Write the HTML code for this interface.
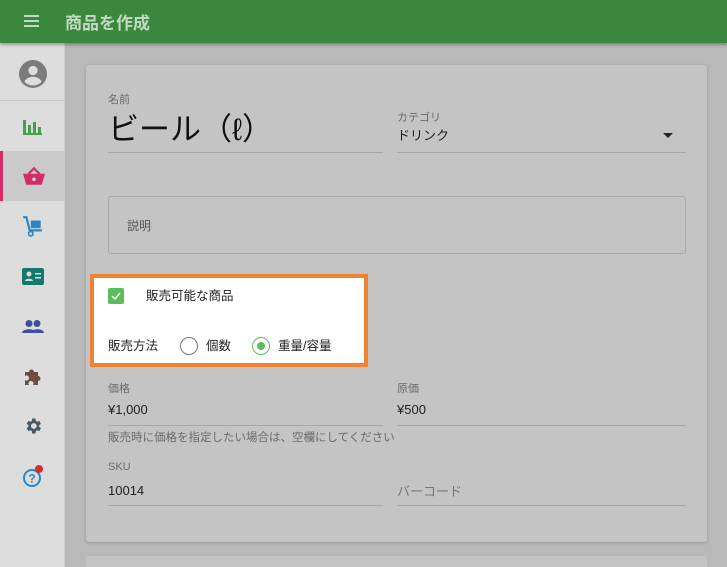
<!DOCTYPE html>
<html><head><meta charset="utf-8"><style>
*{margin:0;padding:0;box-sizing:border-box}
html,body{width:727px;height:567px;overflow:hidden}
body{background:#b9b9b9;font-family:"Liberation Sans","Noto Sans CJK JP",sans-serif;position:relative;color:#222}
.hdr{position:absolute;left:0;top:0;width:727px;height:43px;background:#3a883d;box-shadow:0 2px 3px rgba(0,0,0,.3);z-index:2}
.hdr .t{position:absolute;left:65px;top:9px;font-size:17px;color:#c3d8c3;font-weight:bold}
.ham{position:absolute;left:24px;top:15px;width:15px}
.ham i{display:block;height:2px;background:#c5d8c5;margin-bottom:3px}
.side{position:absolute;left:0;top:43px;width:65px;height:524px;background:#dddddd;border-right:1px solid #cfcfcf}
.it{position:absolute;left:0;width:65px;height:50px;display:flex;align-items:center;justify-content:center}
.card{position:absolute;left:86px;top:65px;width:621px;height:477px;background:#c4c4c4;border-radius:3px;box-shadow:0 1px 3px rgba(0,0,0,.2)}
.card2{position:absolute;left:86px;top:556px;width:621px;height:11px;background:#c4c4c4;border-radius:3px 3px 0 0}
.a{position:absolute;white-space:nowrap}
.lbl{font-size:11px;color:#6a6a6a}
.val{font-size:13px;color:#222}
.ln{position:absolute;height:1px;background:#a8a8a8}
.hl{position:absolute;left:90px;top:274px;width:278px;height:93px;border:4px solid #f08232;background:#fff}
</style></head><body>
<div class="hdr"><div class="ham"><i></i><i></i><i></i></div><div class="t">商品を作成</div></div>
<div class="side">
<div class="it" style="top:4px;height:54px;border-bottom:1px solid #c8c8c8"><svg width="28" height="28" viewBox="0 0 24 24"><circle cx="12" cy="12" r="12" fill="#7b7b7b"/><circle cx="12" cy="9" r="4" fill="#ddd"/><path d="M4.5 18.5c2-3 4.5-4 7.5-4s5.5 1 7.5 4A10 10 0 0 1 4.5 18.5z" fill="#ddd"/></svg></div>
<div class="it" style="top:58px"><svg width="19" height="17"><rect x="0" y="2" width="3" height="15" fill="#47a04b"/><rect x="5" y="7" width="3" height="10" fill="#47a04b"/><rect x="10" y="4" width="3" height="13" fill="#47a04b"/><rect x="15" y="9" width="3" height="8" fill="#47a04b"/><rect x="0" y="15" width="19" height="2" fill="#47a04b"/></svg></div>
<div class="it" style="top:108px;background:#cacaca;border-left:3px solid #d42c6a"><svg width="22" height="18" viewBox="0 0 20 16"><path d="M0 6h20l-3 10H3z" fill="#cf2f68"/><path d="M5 6l5-5 5 5" stroke="#cf2f68" stroke-width="2" fill="none"/><circle cx="10" cy="11" r="1.6" fill="#ddd"/></svg></div>
<div class="it" style="top:158px"><svg width="22" height="22" viewBox="0 0 20 20"><path d="M1 2h3l3 12h11" stroke="#2d87c6" stroke-width="2" fill="none"/><rect x="8" y="5" width="9" height="7" fill="#2d87c6"/><circle cx="8" cy="17" r="2" fill="none" stroke="#2d87c6" stroke-width="1.5"/></svg></div>
<div class="it" style="top:208px"><svg width="22" height="17"><rect width="22" height="17" rx="2" fill="#137a6b"/><circle cx="7" cy="6" r="2.5" fill="#ddd"/><path d="M3 13c0-3 8-3 8 0z" fill="#ddd"/><rect x="13" y="5" width="6" height="1.5" fill="#ddd"/><rect x="13" y="9" width="6" height="1.5" fill="#ddd"/></svg></div>
<div class="it" style="top:258px"><svg width="22" height="13"><circle cx="7" cy="3.5" r="3.5" fill="#3e4e9c"/><circle cx="15" cy="3.5" r="3.5" fill="#3e4e9c"/><path d="M0 13c0-5 14-5 14 0zM9 13c0-5 13-5 13 0z" fill="#3e4e9c"/></svg></div>
<div class="it" style="top:308px"><svg width="20" height="20" viewBox="0 0 20 20"><path d="M2 6h4a2.5 2.5 0 1 1 5 0h4v4a2.5 2.5 0 1 1 0 5v4h-5a2.5 2.5 0 1 0-4 0H2v-5a2.5 2.5 0 1 0 0-4z" fill="#6d4c41"/></svg></div>
<div class="it" style="top:358px"><svg width="20" height="20" viewBox="0 0 24 24"><path fill="#455a64" d="M19.4 13a7.5 7.5 0 0 0 0-2l2.1-1.6-2-3.5-2.5 1a7 7 0 0 0-1.7-1L15 3h-4l-.4 2.9a7 7 0 0 0-1.7 1l-2.5-1-2 3.5L6.5 11a7.5 7.5 0 0 0 0 2l-2.1 1.6 2 3.5 2.5-1a7 7 0 0 0 1.7 1L11 21h4l.4-2.9a7 7 0 0 0 1.7-1l2.5 1 2-3.5zM13 15.5a3.5 3.5 0 1 1 0-7 3.5 3.5 0 0 1 0 7z"/></svg></div>
<div class="it" style="top:408px"><svg width="24" height="24" viewBox="0 0 24 24"><circle cx="11" cy="14" r="8" fill="none" stroke="#2d87c6" stroke-width="2"/><text x="11" y="18.5" font-size="12" font-weight="bold" text-anchor="middle" fill="#2d87c6" font-family="Liberation Sans">?</text><circle cx="18" cy="5" r="4" fill="#d32f2f"/></svg></div>
</div>
<div class="card"></div>
<div class="card2"></div>
<div class="a lbl" style="left:108px;top:91px">名前</div>
<div class="a" style="left:108px;top:104px;font-size:31px;color:#111">ビール（ℓ）</div>
<div class="ln" style="left:108px;top:152px;width:275px"></div>
<div class="a lbl" style="left:397px;top:109px">カテゴリ</div>
<div class="a val" style="left:397px;top:125px">ドリンク</div>
<div class="a" style="left:663px;top:133px;width:0;height:0;border-left:5px solid transparent;border-right:5px solid transparent;border-top:5px solid #222"></div>
<div class="ln" style="left:397px;top:152px;width:289px"></div>
<div class="a" style="left:108px;top:196px;width:578px;height:58px;border:1px solid #a9a9a9;border-radius:3px"></div>
<div class="a" style="left:127px;top:217px;font-size:12px;color:#555">説明</div>
<div class="hl"></div>
<div class="a" style="left:108px;top:288px;width:16px;height:16px;background:#5bbe5b;border-radius:2px"><svg width="16" height="16"><path d="M4 8l3 3 5-6" stroke="#fff" stroke-width="1.4" fill="none"/></svg></div>
<div class="a" style="left:146px;top:285px;font-size:12.5px">販売可能な商品</div>
<div class="a" style="left:108px;top:335px;font-size:12.5px">販売方法</div>
<div class="a" style="left:180px;top:337px;width:18px;height:18px;border:1.5px solid #777;border-radius:50%"></div>
<div class="a" style="left:206px;top:335px;font-size:12.5px">個数</div>
<div class="a" style="left:252px;top:337px;width:18px;height:18px;border:1.5px solid #5bbe5b;border-radius:50%"><div style="margin:3.5px;width:8px;height:8px;border-radius:50%;background:#5bbe5b"></div></div>
<div class="a" style="left:278px;top:335px;font-size:12.5px">重量/容量</div>
<div class="a lbl" style="left:108px;top:380px">価格</div>
<div class="a val" style="left:108px;top:402px">¥1,000</div>
<div class="ln" style="left:108px;top:425px;width:275px"></div>
<div class="a lbl" style="left:397px;top:380px">原価</div>
<div class="a val" style="left:397px;top:402px">¥500</div>
<div class="ln" style="left:397px;top:425px;width:289px"></div>
<div class="a" style="left:108px;top:429px;font-size:11.5px;color:#6a6a6a">販売時に価格を指定したい場合は、空欄にしてください</div>
<div class="a lbl" style="left:108px;top:461px">SKU</div>
<div class="a val" style="left:108px;top:483px">10014</div>
<div class="ln" style="left:108px;top:505px;width:275px"></div>
<div class="a" style="left:397px;top:481px;font-size:13px;color:#777">バーコード</div>
<div class="ln" style="left:397px;top:505px;width:289px"></div>
</body></html>
